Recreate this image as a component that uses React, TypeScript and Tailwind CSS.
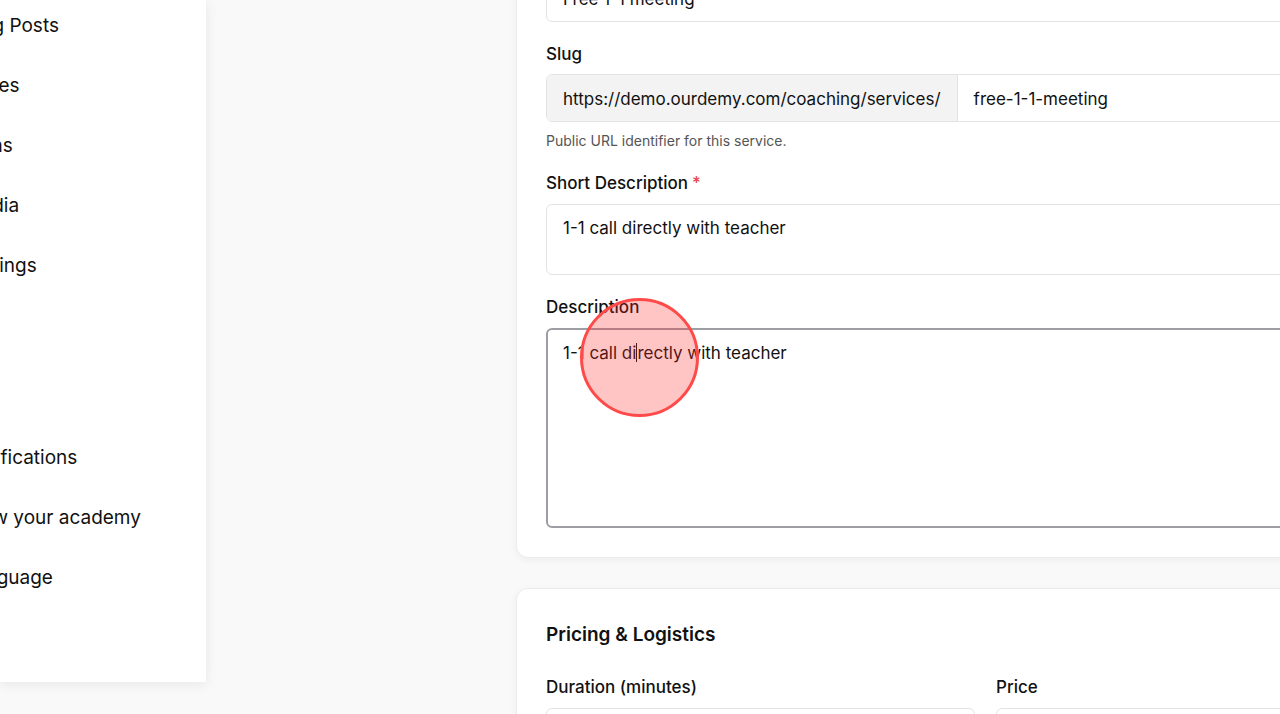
const navTop = ["Blog Posts", "Pages", "Plans", "Media", "Settings"];
const navBottom = ["Notifications", "View your academy", "Language"];

function NavItem({ label }: { label: string }) {
  return (
    <div className="h-[60px] flex items-center text-[19px] text-[#111] whitespace-nowrap">
      {label}
    </div>
  );
}

function Label({ children, required }: { children: React.ReactNode; required?: boolean }) {
  return (
    <div className="h-6 text-[17px] font-medium text-[#111] leading-6 mb-[9px]">
      {children}
      {required && <span className="text-[#e5484d] ml-1">*</span>}
    </div>
  );
}

export default function App() {
  return (
    <div
      className="relative w-full h-[714px] overflow-hidden bg-[#f9f9f9] flex"
      style={{ fontFamily: "Inter, 'Noto Sans', sans-serif" }}
    >
      {/* sidebar, scrolled so labels are cut at the left edge */}
      <aside className="w-[206px] h-[682px] shrink-0 bg-white shadow-[0_2px_12px_rgba(0,0,0,0.08)] overflow-hidden">
        <div className="ml-[-36px] mt-[-4px]">
          {navTop.map((l) => (
            <NavItem key={l} label={l} />
          ))}
          <div className="h-[132px]" />
          {navBottom.map((l) => (
            <NavItem key={l} label={l} />
          ))}
        </div>
      </aside>

      <main className="flex-1 pl-[310px]">
        <div className="w-[939px] flex flex-col gap-[30px]">
          {/* basic info card */}
          <section className="mt-[-90px] bg-white rounded-xl border border-[#ececec] shadow-[0_2px_8px_rgba(0,0,0,0.05)] px-[29px] pt-[30px] pb-[29px]">
            <Label required>Title</Label>
            <div className="h-[48px] rounded-md border border-[#e3e3e3] px-4 pt-[3px] flex items-center text-[17px] text-[#111]">
              Free 1-1 meeting
            </div>

            <div className="mt-[20px]">
              <div className="h-6 text-[17px] font-medium text-[#111] leading-6 mb-[8px]">Slug</div>
              <div className="h-[48px] rounded-md border border-[#e3e3e3] flex text-[17px] text-[#111] overflow-hidden">
                <div className="bg-[#f3f3f3] px-4 pt-[3px] flex items-center border-r border-[#e3e3e3] whitespace-nowrap">
                  https://demo.ourdemy.com/coaching/services/
                </div>
                <div className="flex-1 px-4 pt-[3px] flex items-center">free-1-1-meeting</div>
              </div>
              <p className="mt-[9px] text-[14px] text-[#555] leading-5">
                Public URL identifier for this service.
              </p>
            </div>

            <div className="mt-[20px]">
              <Label required>Short Description</Label>
              <div className="h-[71px] rounded-md border border-[#e3e3e3] px-4 pt-[11px] text-[17px] text-[#111] leading-6">
                1-1 call directly with teacher
              </div>
            </div>

            <div className="mt-[20px]">
              <Label>Description</Label>
              <div className="h-[200px] rounded-md border-2 border-[#9d9da3] px-[15px] pt-[11px] text-[17px] text-[#111] leading-6">
                1-1 call di
                <span className="inline-block w-px h-[19px] bg-[#111] align-[-3px]" />
                rectly with teacher
              </div>
            </div>
          </section>

          {/* pricing card */}
          <section className="bg-white rounded-xl border border-[#ececec] shadow-[0_2px_8px_rgba(0,0,0,0.05)] px-[29px] pt-[32px] pb-[30px]">
            <h2 className="text-[19px] font-semibold text-[#111] leading-7 mb-[26px]">
              Pricing &amp; Logistics
            </h2>
            <div className="grid grid-cols-2 gap-[21px]">
              <div>
                <Label>Duration (minutes)</Label>
                <div className="h-[48px] rounded-md border border-[#e3e3e3]" />
              </div>
              <div>
                <Label>Price</Label>
                <div className="h-[48px] rounded-md border border-[#e3e3e3]" />
              </div>
            </div>
          </section>
        </div>
      </main>

      {/* click highlight */}
      <div className="absolute left-[580px] top-[298px] w-[119px] h-[119px] rounded-full border-[3px] border-[#ff4a4a] bg-[rgba(255,40,40,0.27)] pointer-events-none" />
    </div>
  );
}
